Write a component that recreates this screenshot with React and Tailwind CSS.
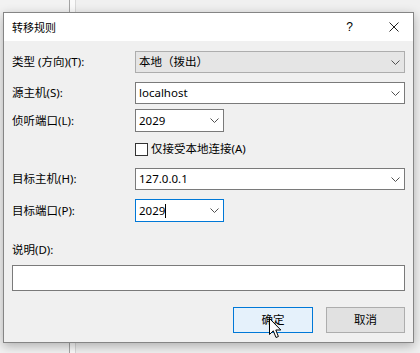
function Chevron() {
  return (
    <svg width="9" height="5" viewBox="0 0 9 5" className="shrink-0">
      <path d="M0.5 0.5 L4.5 4.5 L8.5 0.5" fill="none" stroke="#505050" strokeWidth="1" />
    </svg>
  );
}

function Combo({ width, variant = "edit", children }) {
  const styles = {
    list: "bg-[#e5e5e5] border-[#adadad]",
    edit: "bg-white border-[#7a7a7a]",
    focus: "bg-white border-[#0078d7]",
  };
  return (
    <div
      className={`flex items-center justify-between h-full border pl-[3px] pr-[4px] ${styles[variant]}`}
      style={{ width }}
    >
      <div className="flex items-center">{children}</div>
      <Chevron />
    </div>
  );
}

function Row({ label, h = 22, mt, children }) {
  return (
    <div className="flex items-center" style={{ height: h, marginTop: mt }}>
      <div className="w-[123px] shrink-0">{label}</div>
      {children}
    </div>
  );
}

export default function App() {
  return (
    <div className="relative w-[420px] h-[353px] overflow-hidden bg-[#f0f0f0] font-['Noto_Sans','Noto_Sans_CJK_SC',sans-serif] text-[11.5px] leading-none text-black">
      {/* background window behind the dialog */}
      <div className="flex h-full">
        <div className="w-[70px] h-full bg-[#f2f2f2] border-r border-[#a3a3a3]" />
        <div className="w-[6px] h-full bg-[#fafafa] border-r border-[#d8d8d8]" />
        <div className="flex-1 h-full bg-[#f0f0f0]" />
      </div>

      {/* dialog window */}
      <div className="absolute left-[3px] top-[12px] w-[411px] h-[331px] border border-[#858585] bg-[#f0f0f0] shadow-[0_3px_10px_rgba(0,0,0,0.28)] flex flex-col">
        {/* title bar */}
        <div className="h-[28px] bg-white flex items-center pl-[8px] pr-[14px]">
          <span className="text-[11px]">转移规则</span>
          <span className="ml-auto mr-[36px] text-[12px] font-['Liberation_Sans',sans-serif]">?</span>
          <svg width="10" height="10" viewBox="0 0 10 10">
            <path d="M0.5 0.5 L9.5 9.5 M9.5 0.5 L0.5 9.5" stroke="#222" strokeWidth="1" />
          </svg>
        </div>

        {/* content */}
        <div className="flex flex-col px-[8px]">
          <Row label="类型 (方向)(T):" mt={10}>
            <Combo width={270} variant="list">本地（拨出）</Combo>
          </Row>
          <Row label="源主机(S):" mt={9}>
            <Combo width={270}>localhost</Combo>
          </Row>
          <Row label="侦听端口(L):" mt={5} h={23}>
            <Combo width={89}>2029</Combo>
          </Row>
          <Row label="" mt={10} h={14}>
            <div className="flex items-center">
              <div className="w-[13px] h-[13px] border border-[#333333] bg-white" />
              <span className="ml-[3px]">仅接受本地连接(A)</span>
            </div>
          </Row>
          <Row label="目标主机(H):" mt={12}>
            <Combo width={270}>127.0.0.1</Combo>
          </Row>
          <Row label="目标端口(P):" mt={9} h={23}>
            <Combo width={89} variant="focus">
              <span>2029</span>
              <span className="w-[1px] h-[14px] bg-black" />
            </Combo>
          </Row>

          <div className="h-[16px] flex items-center mt-[20px]">说明(D):</div>
          <div className="h-[26px] mt-[7px] bg-white border border-[#7a7a7a] w-[393px]" />

          <div className="flex justify-end gap-[13px] mt-[16px]">
            <div className="w-[80px] h-[26px] border border-[#0078d7] bg-[#e5f1fb] flex items-center justify-center">
              确定
            </div>
            <div className="w-[79px] h-[26px] border border-[#adadad] bg-[#e1e1e1] flex items-center justify-center">
              取消
            </div>
          </div>
        </div>
      </div>

      {/* mouse cursor */}
      <svg className="absolute left-[269px] top-[318px]" width="13" height="21" viewBox="0 0 13 21">
        <path d="M0.5 0.5 L0.5 16.5 L4.3 12.8 L7 19.5 L9.4 18.5 L6.8 12 L11.8 12 Z" fill="white" stroke="black" strokeWidth="1" strokeLinejoin="miter" />
      </svg>
    </div>
  );
}
